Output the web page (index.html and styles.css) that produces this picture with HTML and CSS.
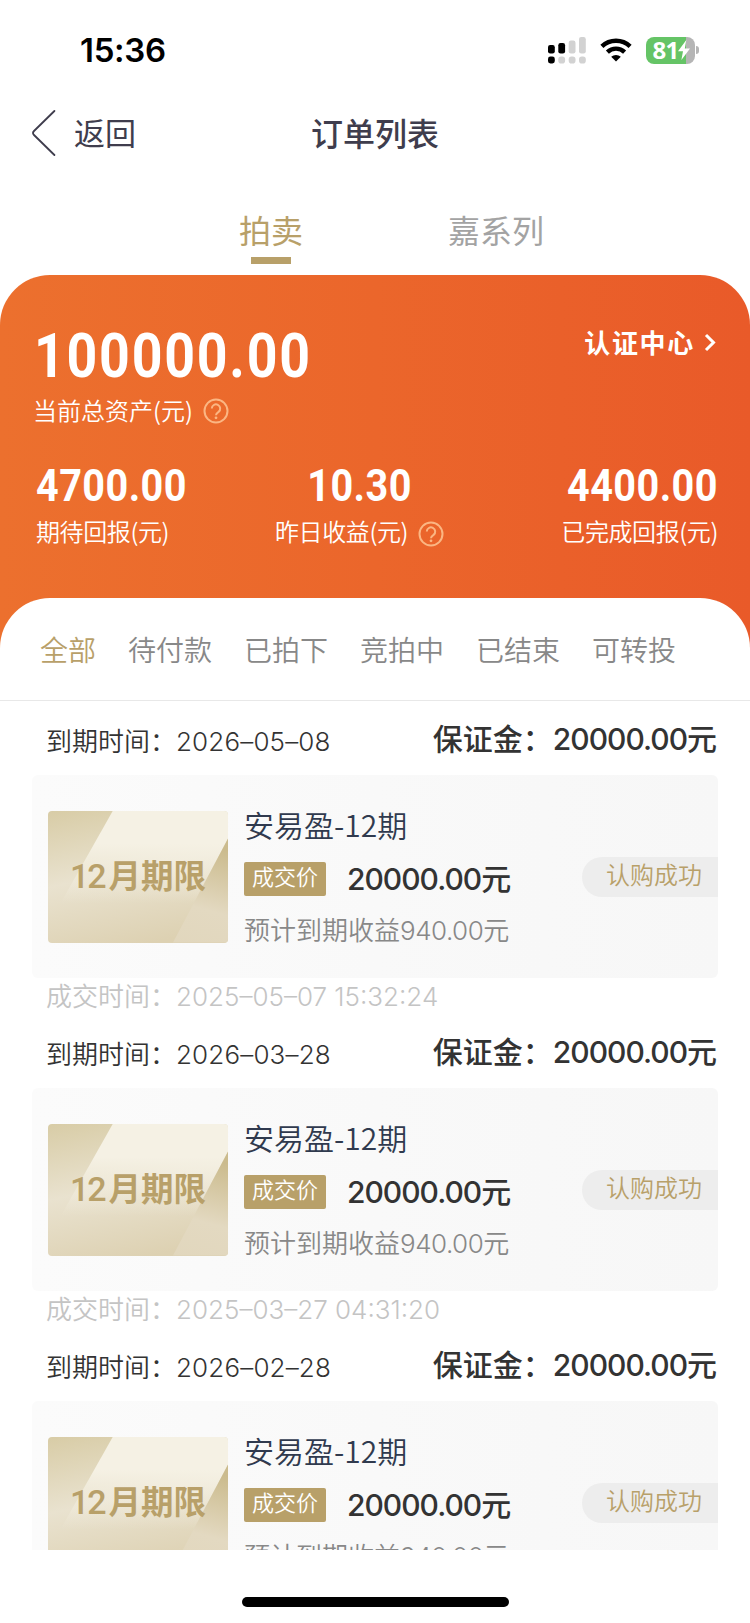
FILE: index.html
```html
<!DOCTYPE html>
<html lang="zh-CN">
<head>
    <meta charset="UTF-8">
    <meta name="viewport" content="width=device-width, initial-scale=1.0">
    <title>订单列表</title>
    <link rel="stylesheet" href="styles.css">
</head>
<body>
    <div class="status-bar">
        <span class="clock">15:36</span>
        <div class="status-icons">
            <svg class="signal" width="38" height="27" viewBox="0 0 38 27">
                <rect x="0" y="8" width="6.8" height="8.5" rx="2.2"/>
                <rect x="10.3" y="6" width="6.8" height="10.5" rx="2.2"/>
                <rect class="off" x="20.7" y="3.5" width="6.8" height="13" rx="2.2"/>
                <rect class="off" x="31" y="0" width="6.8" height="16.5" rx="2.2"/>
                <rect x="0" y="19.5" width="6.8" height="7" rx="2.4"/>
                <rect class="off" x="10.3" y="19.5" width="6.8" height="7" rx="2.8"/>
                <rect class="off" x="20.7" y="19.5" width="6.8" height="7" rx="2.8"/>
                <rect class="off" x="31" y="19.5" width="6.8" height="7" rx="2.8"/>
            </svg>
            <svg class="wifi" width="32" height="24" viewBox="0 0 32 24">
                <path class="arc" d="M1.9 8.4a20.4 20.4 0 0 1 28.2 0"/>
                <path class="arc" d="M7.4 14.1a12.5 12.5 0 0 1 17.2 0"/>
                <path d="M16 23.6l-4.8-4.8a7 7 0 0 1 9.6 0z"/>
            </svg>
            <div class="battery">
                <span>81</span>
                <svg width="12" height="20" viewBox="0 0 12 20">
                    <path d="M8.3 0L0 11.2h5L3.4 20 12 8.6H6.8z"/>
                </svg>
            </div>
            <i class="battery-cap"></i>
        </div>
    </div>

    <div class="nav">
        <a class="back">
            <svg width="24" height="46" viewBox="0 0 24 46"><path d="M22.4 1L2 21q-2 2 0 4l20.4 20"/></svg>
            <span>返回</span>
        </a>
        <h1>订单列表</h1>
    </div>

    <div class="series">
        <a class="active">拍卖</a>
        <a>嘉系列</a>
    </div>

    <div class="assets">
        <div class="total-row">
            <div class="num big">100000.00</div>
            <a class="cert">认证中心<svg width="12" height="19" viewBox="0 0 12 19"><path d="M2 2l7.500 7.500L2 17"/></svg></a>
        </div>
        <div class="label total-label">当前总资产(元)
            <svg class="help" width="26" height="26" viewBox="0 0 26 26"><circle cx="13" cy="13" r="11.500"/><path d="M8.800 10.500a4.200 4.200 0 1 1 6.800 3.400c-1.700 1.200-2.600 1.700-2.600 3.300"/><circle class="dot" cx="13" cy="19.800" r="1.400"/></svg>
        </div>
        <div class="stats">
            <div class="stat">
                <div class="num">4700.00</div>
                <div class="label">期待回报(元)</div>
            </div>
            <div class="stat middle">
                <div class="num">10.30</div>
                <div class="label">昨日收益(元)
                    <svg class="help" width="26" height="26" viewBox="0 0 26 26"><circle cx="13" cy="13" r="11.500"/><path d="M8.800 10.500a4.200 4.200 0 1 1 6.800 3.400c-1.700 1.200-2.600 1.700-2.600 3.300"/><circle class="dot" cx="13" cy="19.800" r="1.400"/></svg>
                </div>
            </div>
            <div class="stat right">
                <div class="num">4400.00</div>
                <div class="label">已完成回报(元)</div>
            </div>
        </div>
    </div>

    <div class="filters">
        <a class="active">全部</a>
        <a>待付款</a>
        <a>已拍下</a>
        <a>竞拍中</a>
        <a>已结束</a>
        <a>可转投</a>
    </div>

    <div class="orders">
        <div class="order">
            <div class="order-head">
                <span class="expire">到期时间：<span>2026–05–08</span></span>
                <span class="deposit">保证金：<b>20000.00</b>元</span>
            </div>
            <div class="card">
                <div class="thumb"><span><i>12</i>月期限</span></div>
                <div class="info">
                    <div class="name">安易盈-12期</div>
                    <div class="price"><span class="tag">成交价</span><b>20000.00</b>元</div>
                    <div class="income">预计到期收益<b>940.00</b>元</div>
                </div>
                <div class="state">认购成功</div>
            </div>
            <div class="deal-time">成交时间：2025–05–07 15:32:24</div>
        </div>

        <div class="order">
            <div class="order-head">
                <span class="expire">到期时间：<span>2026–03–28</span></span>
                <span class="deposit">保证金：<b>20000.00</b>元</span>
            </div>
            <div class="card">
                <div class="thumb"><span><i>12</i>月期限</span></div>
                <div class="info">
                    <div class="name">安易盈-12期</div>
                    <div class="price"><span class="tag">成交价</span><b>20000.00</b>元</div>
                    <div class="income">预计到期收益<b>940.00</b>元</div>
                </div>
                <div class="state">认购成功</div>
            </div>
            <div class="deal-time">成交时间：2025–03–27 04:31:20</div>
        </div>

        <div class="order">
            <div class="order-head">
                <span class="expire">到期时间：<span>2026–02–28</span></span>
                <span class="deposit">保证金：<b>20000.00</b>元</span>
            </div>
            <div class="card">
                <div class="thumb"><span><i>12</i>月期限</span></div>
                <div class="info">
                    <div class="name">安易盈-12期</div>
                    <div class="price"><span class="tag">成交价</span><b>20000.00</b>元</div>
                    <div class="income">预计到期收益<b>940.00</b>元</div>
                </div>
                <div class="state">认购成功</div>
            </div>
        </div>
    </div>

    <div class="home-bar"></div>
</body>
</html>
```
FILE: styles.css
```css
* {
    box-sizing: border-box;
}

body {
    margin: 0;
    width: 750px;
    height: 1623px;
    overflow: hidden;
    background: #fff;
    font-family: Inter, "Noto Sans CJK SC", sans-serif;
    color: #333;
    display: flex;
    flex-direction: column;
}

svg {
    display: block;
    flex: none;
}

/* status bar */
.status-bar {
    height: 100px;
    padding: 0 51px 0 80px;
    display: flex;
    align-items: center;
    justify-content: space-between;
    flex: none;
}

.clock {
    font-size: 33px;
    font-weight: 600;
    letter-spacing: -0.3px;
    color: #000;
}

.status-icons {
    display: flex;
    align-items: center;
}

.signal .off {
    fill: #d2d2d2;
}

.wifi {
    margin: 0 14px;
}

.wifi .arc {
    fill: none;
    stroke: #000;
    stroke-width: 4.4;
}

.battery {
    width: 49px;
    height: 27px;
    border-radius: 8px;
    background: linear-gradient(90deg, #65c466 81%, #b5b5b5 81%);
    color: #fff;
    font-family: "Open Sans", sans-serif;
    font-size: 24px;
    font-weight: 700;
    line-height: 25px;
    letter-spacing: -0.8px;
    display: flex;
    align-items: center;
    padding-left: 7px;
}

.battery span {
    margin-bottom: 2px;
}

.battery svg {
    fill: #fff;
}

.battery-cap {
    width: 3px;
    height: 8px;
    margin-left: 1.500px;
    border-radius: 0 4px 4px 0;
    background: #b5b5b5;
}

/* nav */
.nav {
    height: 66px;
    padding: 0 32px;
    display: grid;
    grid-template-columns: 1fr auto 1fr;
    align-items: center;
    color: #3f3d4d;
    flex: none;
}

.back {
    display: flex;
    align-items: center;
    gap: 18px;
    font-size: 31px;
}

.back span {
    margin-bottom: 3px;
}

.back svg {
    fill: none;
    stroke: #3f3d4d;
    stroke-width: 1.800;
    stroke-linecap: round;
}

.nav h1 {
    margin: 0 0 3px;
    font-size: 32px;
    font-weight: 500;
}

/* series tabs */
.series {
    height: 109px;
    padding: 43px 0 0 239px;
    display: flex;
    gap: 145px;
    font-size: 32px;
    line-height: 46px;
    color: #a3a3a3;
    flex: none;
}

.series .active {
    color: #b8a069;
}

.series .active::after {
    content: "";
    display: block;
    width: 40px;
    height: 7px;
    margin: 2px auto 0;
    background: #b8a069;
}

/* assets */
.assets {
    height: 373px;
    padding: 49px 34px 0;
    border-radius: 50px 50px 0 0;
    background: linear-gradient(90deg, #ec702e, #eb662b 50%, #e95a29);
    color: #fff;
    flex: none;
}

.num {
    font-family: Roboto, sans-serif;
    font-weight: 700;
    font-size: 45px;
    line-height: 54px;
    letter-spacing: 0.5px;
    transform: scaleX(0.88);
    transform-origin: left;
}

.big {
    font-size: 61px;
    line-height: 64px;
    letter-spacing: 2px;
}

.total-row {
    display: flex;
    justify-content: space-between;
    height: 64px;
}

.cert {
    display: flex;
    align-items: center;
    gap: 9px;
    height: 34px;
    font-size: 26px;
    font-weight: 700;
    letter-spacing: 1.700px;
}

.cert svg {
    margin-top: 2px;
    fill: none;
    stroke: #fff;
    stroke-width: 3;
}

.label {
    font-family: "Noto Sans CJK SC", sans-serif;
    font-size: 24px;
    font-weight: 350;
    line-height: 34px;
    display: flex;
    align-items: center;
}

.total-label {
    padding-top: 5px;
    margin-left: -1px;
}

.help {
    fill: none;
    stroke: #fbb683;
    stroke-width: 2;
    margin: 2px 0 0 10px;
}

.help .dot {
    fill: #fbb683;
    stroke: none;
}

.stats {
    margin: 32px 0 0 2px;
    display: grid;
    grid-template-columns: 239px auto 1fr;
}

.stats .label {
    padding-top: 1px;
    letter-spacing: -0.4px;
}

.middle .num {
    transform-origin: center;
    text-align: center;
}

.middle .help {
    margin-top: 6px;
}

.right .num {
    margin-right: -2px;
    text-align: right;
    transform-origin: right;
}

.right .label {
    justify-content: flex-end;
    margin-right: -2px;
}

/* filters */
.filters {
    height: 103px;
    margin-top: -50px;
    padding: 0 40px;
    border-radius: 50px 50px 0 0;
    border-bottom: 1px solid #e8e8e8;
    background: #fff;
    display: flex;
    gap: 32px;
    font-family: "Noto Sans CJK SC", sans-serif;
    font-size: 28px;
    font-weight: 350;
    line-height: 102px;
    color: #888;
    flex: none;
}

.filters .active {
    color: #b8a069;
}

/* orders */
.orders {
    height: 849px;
    padding: 0 32px;
    overflow: hidden;
    flex: none;
}

.order {
    height: 313px;
}

.order-head {
    height: 74px;
    padding: 0 1px 0 14px;
    display: flex;
    justify-content: space-between;
}

.expire {
    font-size: 26px;
    font-weight: 350;
    line-height: 82px;
}

.expire span {
    letter-spacing: 0.15px;
}

.deposit {
    font-size: 30px;
    font-weight: 500;
    line-height: 76px;
}

.deposit b,
.price b {
    font-weight: 500;
    letter-spacing: -1px;
}

.card {
    height: 203px;
    padding-left: 16px;
    border-radius: 6px;
    background: linear-gradient(90deg, #fbfbfb, #f7f7f7);
    display: flex;
    align-items: center;
}

.thumb {
    width: 180px;
    height: 132px;
    border-radius: 4px;
    overflow: hidden;
    display: grid;
    background: linear-gradient(168deg, #d8cca6 0%, #e9e2cf 45%, #ddd1b2 90%);
}

.thumb::before {
    content: "";
    grid-area: 1 / 1;
    background: linear-gradient(180deg, #f5f1e4 25%, rgba(245, 241, 228, 0) 70%);
    clip-path: polygon(65px 0, 180px 0, 180px 28px, 125px 132px, 0 132px, 0 115px);
}

.thumb::after {
    content: "";
    grid-area: 1 / 1;
    background: linear-gradient(195deg, #cbbb8d 22%, #e3d9c1 58%, #e0d5ba 100%);
    clip-path: polygon(180px 28px, 180px 132px, 125px 132px);
}

.thumb span {
    grid-area: 1 / 1;
    place-self: center;
    z-index: 1;
    font-size: 32.500px;
    font-weight: 700;
    line-height: 48px;
    padding-bottom: 1px;
    color: #b8a069;
}

.thumb i {
    margin-right: 4px;
    font-family: Roboto, sans-serif;
    font-style: normal;
    font-size: 34px;
    font-weight: 500;
    letter-spacing: -2px;
}

.info {
    margin: 4px 0 0 16px;
    flex: 1;
}

.name {
    font-family: "Noto Sans CJK SC", sans-serif;
    font-size: 30px;
    font-weight: 350;
    line-height: 36px;
    color: #303a4e;
}

.price {
    display: flex;
    align-items: center;
    margin-top: 17px;
    font-size: 30px;
    font-weight: 500;
    line-height: 40px;
}

.tag {
    width: 82px;
    height: 34px;
    margin: -1px 21px 0 0;
    border-radius: 2px;
    background: #b8a069;
    color: #fff;
    font-size: 22px;
    font-weight: 350;
    line-height: 31px;
    text-align: center;
}

.income {
    margin-top: 12px;
    font-size: 26px;
    font-weight: 350;
    line-height: 40px;
    color: #888;
}

.income b {
    font-weight: 350;
    letter-spacing: -0.5px;
}

.state {
    width: 136px;
    height: 40px;
    padding-left: 24px;
    border-radius: 20px 0 0 20px;
    background: #ededed;
    color: #b8a069;
    font-size: 24px;
    font-weight: 350;
    line-height: 38px;
}

.deal-time {
    padding-left: 14px;
    font-size: 26px;
    font-weight: 350;
    line-height: 38px;
    color: #c4c4c4;
}

.home-bar {
    width: 267px;
    height: 10px;
    margin: 47px auto 0;
    border-radius: 5px;
    background: #000;
    flex: none;
}
```
